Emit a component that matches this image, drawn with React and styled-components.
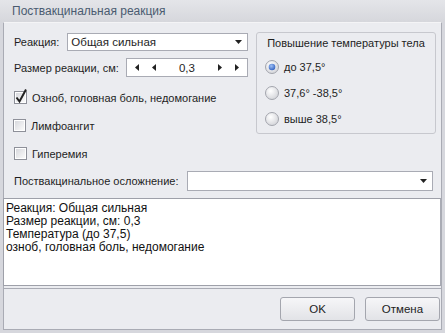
import styled, { createGlobalStyle } from 'styled-components';

const GlobalStyle = createGlobalStyle`
  body {
    margin: 0;
    font-family: 'Liberation Sans', Arial, sans-serif;
    font-size: 11px;
    color: #1e1e1e;
  }
`;

const Frame = styled.div`
  width: 445px;
  height: 333px;
  box-sizing: border-box;
  background: #d6d7dd;
  display: flex;
  flex-direction: column;
`;

const TitleBar = styled.div`
  height: 22px;
  flex-shrink: 0;
  display: flex;
  align-items: center;
  padding-left: 12px;
  background: linear-gradient(#e4e5e9, #d6d7dc);
  color: #4a5b70;
  font-size: 12px;
`;

const Body = styled.div`
  flex: 1;
  margin: 0 3px 3px 3px;
  border: 1px solid #a9abb4;
  border-top-color: #f4f4f6;
  background: #ebecf0;
  display: flex;
  flex-direction: column;
`;

const Top = styled.div`
  display: flex;
  padding: 10px 0 0 10px;
  height: 138px;
`;

const LeftCol = styled.div`
  width: 234px;
  display: flex;
  flex-direction: column;
`;

const Row = styled.div`
  display: flex;
  align-items: center;
  height: ${(p) => p.h || 19}px;
  margin-bottom: ${(p) => p.mb || 0}px;
`;

const Label = styled.span`
  white-space: nowrap;
  margin-right: ${(p) => p.mr || 0}px;
`;

const Field = styled.div`
  box-sizing: border-box;
  height: ${(p) => p.h || 19}px;
  flex: 1;
  background: #fff;
  border: 1px solid #a9abb4;
  display: flex;
  align-items: center;
  padding: 0 5px 0 3px;
`;

const SpinField = styled(Field)`
  padding: 0 2px;
`;

const FieldText = styled.span`
  flex: 1;
  font-size: 11.5px;
`;

const SpinText = styled.span`
  flex: 1;
  text-align: center;
  font-size: 11.5px;
`;

const ArrowBtn = styled.span`
  width: 17px;
  display: flex;
  justify-content: center;
`;

const CheckRow = styled.label`
  display: flex;
  align-items: center;
  height: 16px;
  gap: 4px;
  margin-left: ${(p) => p.ml || 0}px;
  margin-top: ${(p) => p.mt || 0}px;
`;

const Group = styled.div`
  margin-left: 8px;
  margin-top: -1px;
  width: 180px;
  height: 102px;
  box-sizing: border-box;
  border: 1px solid #c7c8ce;
  border-radius: 3px;
  display: flex;
  flex-direction: column;
`;

const GroupTitle = styled.div`
  text-align: center;
  height: 21px;
  line-height: 21px;
`;

const RadioRow = styled.div`
  display: flex;
  align-items: center;
  gap: 5px;
  height: 16px;
  margin: ${(p) => p.mt}px 0 0 8px;
`;

const ComplRow = styled.div`
  display: flex;
  align-items: center;
  padding: 0 8px 0 10px;
  height: 20px;
`;

const Memo = styled.div`
  margin: 7px 0 0 -1px;
  height: 88px;
  box-sizing: border-box;
  background: #fff;
  border: 1px solid #9ea0a9;
  border-right-color: #a9abb4;
  padding: 3px 2px;
  line-height: 13px;
  font-size: 12px;
  color: #111;
`;

const Footer = styled.div`
  flex: 1;
  border-top: 1px solid #a9abb4;
  margin: 2px -1px 0;
  display: flex;
  justify-content: flex-end;
  align-items: flex-start;
  padding: 8px 2px 0 0;
  gap: 10px;
`;

const Button = styled.button`
  width: 75px;
  height: 24px;
  border: 1px solid #a4a6ae;
  border-radius: 3px;
  background: linear-gradient(#f6f6f8, #e2e3e7);
  font-family: 'Liberation Sans', Arial, sans-serif;
  font-size: 11.5px;
  color: #222;
  padding: 0;
`;

function DownArrow() {
  return (
    <svg width="7" height="4" viewBox="0 0 7 4">
      <path d="M0 0h7L3.5 4z" fill="#222" />
    </svg>
  );
}

function SideArrow({ left }) {
  return (
    <svg width="4" height="7" viewBox="0 0 4 7">
      <path d={left ? 'M4 0v7L0 3.5z' : 'M0 0v7L4 3.5z'} fill="#222" />
    </svg>
  );
}

function CheckBox({ checked }) {
  return (
    <svg width="14" height="14" viewBox="0 0 14 14" style={{ overflow: 'visible' }}>
      <defs>
        <linearGradient id="cb" x1="0" y1="0" x2="1" y2="1">
          <stop offset="0" stopColor="#d8d9de" />
          <stop offset="1" stopColor="#fafafa" />
        </linearGradient>
      </defs>
      <rect x="0.5" y="0.5" width="12" height="12" fill="#fff" stroke="#8e9099" />
      <rect x="2" y="2" width="9" height="9" fill="url(#cb)" />
      {checked && (
        <path d="M2.5 6.5L5.5 10.5L12 -1.5" fill="none" stroke="#222" strokeWidth="2" />
      )}
    </svg>
  );
}

function Radio({ checked }) {
  return (
    <svg width="14" height="14" viewBox="0 0 14 14">
      <defs>
        <radialGradient id="rg" cx="0.4" cy="0.35" r="0.7">
          <stop offset="0" stopColor="#ffffff" />
          <stop offset="1" stopColor="#d2d3d8" />
        </radialGradient>
        <radialGradient id="rb" cx="0.4" cy="0.35" r="0.7">
          <stop offset="0" stopColor="#9fc0f5" />
          <stop offset="1" stopColor="#2f5fbf" />
        </radialGradient>
      </defs>
      <circle cx="7" cy="7" r="6.5" fill="url(#rg)" stroke="#a3a5ad" />
      {checked && <circle cx="7" cy="7" r="3.3" fill="url(#rb)" />}
    </svg>
  );
}

export default function App() {
  return (
    <>
      <GlobalStyle />
      <Frame>
        <TitleBar>Поствакцинальная реакция</TitleBar>
        <Body>
          <Top>
            <LeftCol>
              <Row h={18} mb={7}>
                <Label mr={8}>Реакция:</Label>
                <Field h={18}>
                  <FieldText>Общая сильная</FieldText>
                  <DownArrow />
                </Field>
              </Row>
              <Row h={19}>
                <Label mr={7}>Размер реакции, см:</Label>
                <SpinField h={19}>
                  <ArrowBtn><SideArrow left /></ArrowBtn>
                  <ArrowBtn><SideArrow left /></ArrowBtn>
                  <SpinText>0,3</SpinText>
                  <ArrowBtn><SideArrow /></ArrowBtn>
                  <ArrowBtn><SideArrow /></ArrowBtn>
                </SpinField>
              </Row>
              <CheckRow mt={13}>
                <CheckBox checked />
                Озноб, головная боль, недомогание
              </CheckRow>
              <CheckRow mt={12} ml={-1}>
                <CheckBox />
                Лимфоангит
              </CheckRow>
              <CheckRow mt={12}>
                <CheckBox />
                Гиперемия
              </CheckRow>
            </LeftCol>
            <Group>
              <GroupTitle>Повышение температуры тела</GroupTitle>
              <RadioRow mt={5}>
                <Radio checked />
                до 37,5°
              </RadioRow>
              <RadioRow mt={10}>
                <Radio />
                37,6° -38,5°
              </RadioRow>
              <RadioRow mt={10}>
                <Radio />
                выше 38,5°
              </RadioRow>
            </Group>
          </Top>
          <ComplRow>
            <Label mr={9}>Поствакцинальное осложнение:</Label>
            <Field h={20}>
              <FieldText />
              <DownArrow />
            </Field>
          </ComplRow>
          <Memo>
            Реакция: Общая сильная
            <br />
            Размер реакции, см: 0,3
            <br />
            Температура (до 37,5)
            <br />
            озноб, головная боль, недомогание
          </Memo>
          <Footer>
            <Button>OK</Button>
            <Button>Отмена</Button>
          </Footer>
        </Body>
      </Frame>
    </>
  );
}
